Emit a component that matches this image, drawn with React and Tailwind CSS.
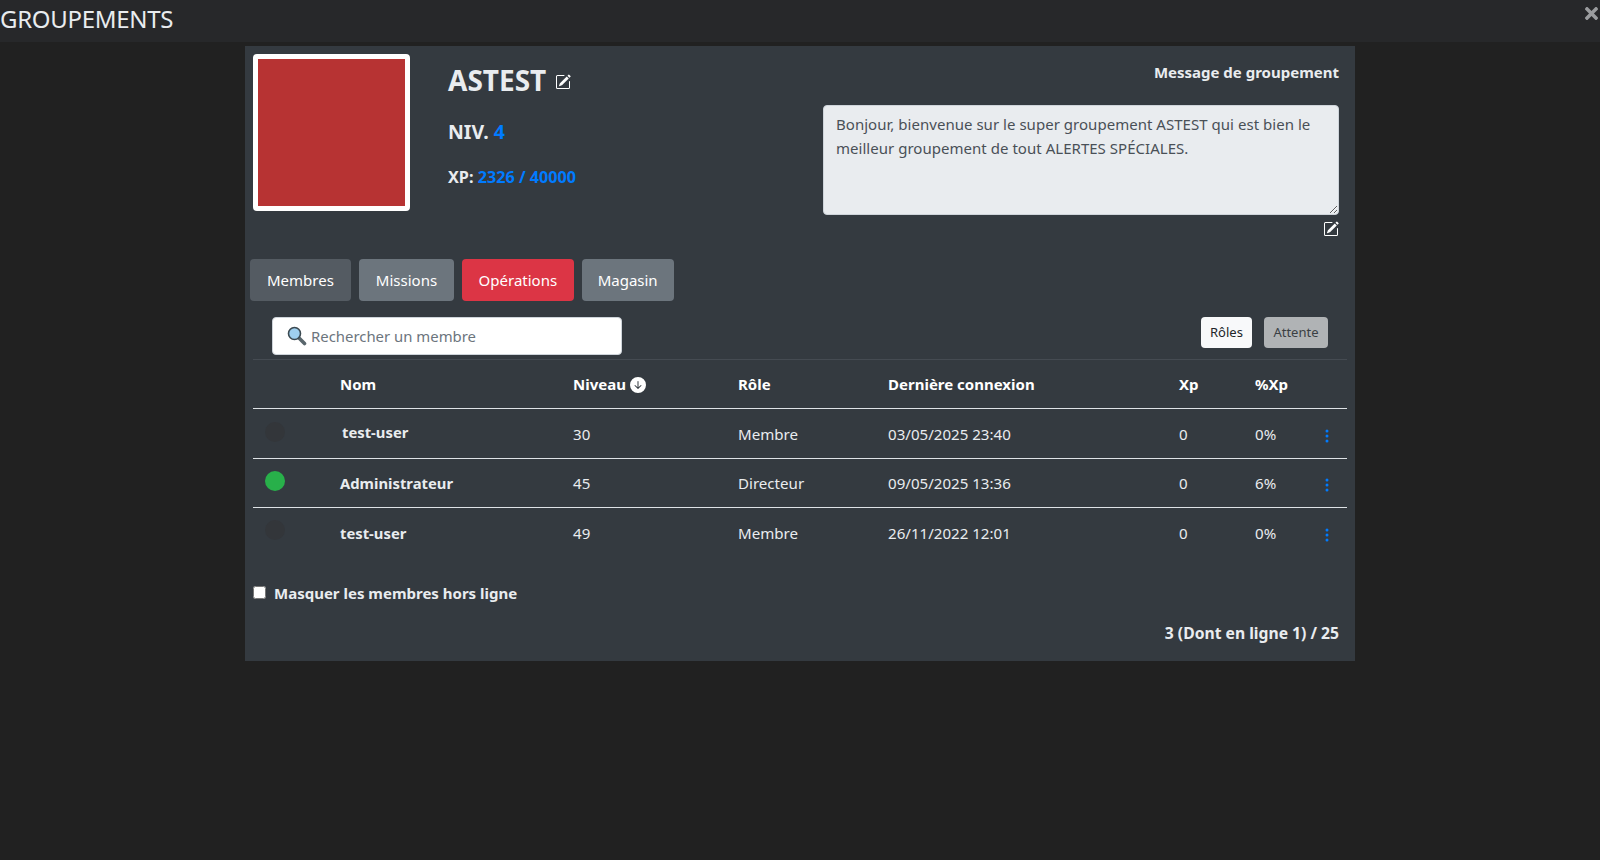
import { BsPencilSquare, BsThreeDotsVertical, BsArrowDownCircleFill } from 'react-icons/bs';
import { FaTimes } from 'react-icons/fa';

const font = { fontFamily: '"Noto Sans", sans-serif' };

const members = [
  { name: 'test-user', level: 30, role: 'Membre', last: '03/05/2025 23:40', xp: 0, pct: '0%', online: false },
  { name: 'Administrateur', level: 45, role: 'Directeur', last: '09/05/2025 13:36', xp: 0, pct: '6%', online: true },
  { name: 'test-user', level: 49, role: 'Membre', last: '26/11/2022 12:01', xp: 0, pct: '0%', online: false },
];

const cols = 'grid grid-cols-[87px_233px_165px_150px_291px_76px_67px_25px] items-center';

function Loupe() {
  return (
    <svg width="20" height="20" viewBox="0 0 20 20">
      <line x1="11.5" y1="11.5" x2="17.5" y2="17.5" stroke="#59666c" strokeWidth="3.6" strokeLinecap="round" />
      <circle cx="7.5" cy="7.5" r="6" fill="#9fd0f0" stroke="#3c4a52" strokeWidth="1.6" />
    </svg>
  );
}

export default function App() {
  return (
    <div style={font} className="h-[860px] bg-[#212121] text-white overflow-hidden">
      <div className="h-[42px] bg-[#27282a] flex justify-between">
        <div className="text-[24px] leading-[38px] tracking-[-0.3px] text-[#e9ecef]">GROUPEMENTS</div>
        <FaTimes className="text-[#9a9c9e] text-[19px] mt-[4px] -mr-px" />
      </div>

      <div className="ml-[245px] mt-1 w-[1110px] h-[615px] bg-[#343a40]">
        <div className="flex pl-2 pt-2 pr-4">
          <div className="w-[157px] h-[157px] shrink-0 border-[5px] border-white rounded bg-[#b73333]"></div>
          <div className="ml-[38px] w-[375px] shrink-0">
            <div className="flex items-center gap-2 mt-[5px] text-[28px] leading-[42px] font-bold text-[#e9ecef]">
              ASTEST <BsPencilSquare className="text-[16px] text-white mt-[3px] ml-px" />
            </div>
            <div className="mt-[16px] text-[19.5px] leading-[30px] font-bold text-[#e9ecef]">
              NIV. <span className="text-[#007bff]">4</span>
            </div>
            <div className="mt-[18px] text-[16.2px] leading-[24px] font-bold text-[#e9ecef]">
              XP: <span className="text-[#007bff]">2326 / 40000</span>
            </div>
          </div>
          <div className="flex-1 flex flex-col items-end">
            <div className="mt-[6px] text-[15px] leading-[24px] font-bold text-[#e9ecef]">Message de groupement</div>
            <textarea
              readOnly
              className="mt-[21px] w-full h-[110px] bg-[#e9ecef] text-[#495057] text-[15px] leading-[24px] tracking-[0.03px] rounded px-3 py-[6px] border border-[#ced4da] outline-none"
              defaultValue="Bonjour, bienvenue sur le super groupement ASTEST qui est bien le meilleur groupement de tout ALERTES SPÉCIALES."
            />
            <BsPencilSquare className="mt-[6px] text-[16px] text-white" />
          </div>
        </div>

        <div className="flex gap-2 pl-[5px] mt-[22px] text-[15px] text-white">
          <button className="h-[42px] px-[17px] rounded bg-[#545b62]">Membres</button>
          <button className="h-[42px] px-[17px] rounded bg-[#6c757d]">Missions</button>
          <button className="h-[42px] px-[16.5px] rounded bg-[#dc3545]">Opérations</button>
          <button className="h-[42px] px-4 rounded bg-[#6c757d]">Magasin</button>
        </div>

        <div className="flex justify-between items-start pl-[27px] pr-[27px] mt-4">
          <div className="w-[350px] h-[38px] bg-white border border-[#ced4da] rounded flex items-center pl-[14px] gap-[4px]">
            <Loupe />
            <input readOnly placeholder="Rechercher un membre" className="flex-1 outline-none text-[14.9px] text-[#495057] placeholder:text-[#6c757d]" />
          </div>
          <div className="flex gap-3">
            <button className="h-[31px] px-[9px] pt-px rounded bg-[#f8f9fa] text-[#212529] text-[13px]">Rôles</button>
            <button className="h-[31px] px-[9.5px] pt-px rounded bg-[#b0b3b5] text-[#3a3f44] text-[13px]">Attente</button>
          </div>
        </div>

        <div className="mx-2 mt-1 border-t border-[#454b52]">
          <div className={`${cols} h-[49px] border-b border-[#dee2e6] text-[15px] font-bold`}>
            <div></div>
            <div>Nom</div>
            <div className="flex items-center gap-1">
              Niveau <BsArrowDownCircleFill className="text-[16px] text-white mt-[2px]" />
            </div>
            <div>Rôle</div>
            <div>Dernière connexion</div>
            <div>Xp</div>
            <div>%Xp</div>
            <div></div>
          </div>
          {members.map((m, i) => (
            <div
              key={i}
              className={`${cols} text-[15.1px] text-[#e9ecef] ${i === 0 ? 'h-[50px] pt-px' : ''} ${i === 1 ? 'h-[49px]' : ''} ${i === 2 ? 'h-[49px] pt-px' : ''} ${i < 2 ? 'border-b border-[#dee2e6]' : ''}`}
            >
              <div className={`ml-3 w-5 h-5 rounded-full ${i === 2 ? 'mb-[7px]' : 'mb-[5px]'} ${m.online ? 'bg-[#28b04a]' : 'bg-[#33363a]'}`}></div>
              <div className={`font-bold text-[14.8px] ${i === 0 ? 'ml-[2px] mb-[3px]' : ''}`}>{m.name}</div>
              <div>{m.level}</div>
              <div>{m.role}</div>
              <div>{m.last}</div>
              <div>{m.xp}</div>
              <div>{m.pct}</div>
              <BsThreeDotsVertical className="text-[#007bff] text-[16px] mt-[3px] -ml-[3px]" />
            </div>
          ))}
        </div>

        <div className="flex items-center gap-[8px] pl-2 mt-[24px] text-[15px] font-bold text-[#e9ecef]">
          <input type="checkbox" className="w-[13px] h-[13px] -mt-px" />
          <span className="pt-px">Masquer les membres hors ligne</span>
        </div>
        <div className="text-right pr-4 mt-[17px] text-[15.7px] leading-[22.5px] font-bold text-[#e9ecef]">3 (Dont en ligne 1) / 25</div>
      </div>
    </div>
  );
}
